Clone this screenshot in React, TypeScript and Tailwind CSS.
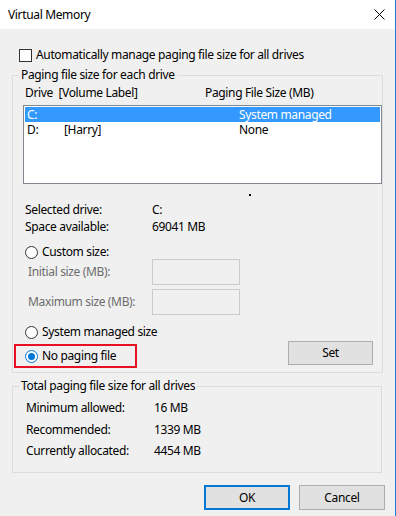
const Radio = ({ checked }: { checked?: boolean }) => (
  <span
    className={
      checked
        ? "flex h-[13px] w-[13px] shrink-0 items-center justify-center rounded-full border border-[#0078d7] bg-white"
        : "flex h-[13px] w-[13px] shrink-0 items-center justify-center rounded-full border border-[#333333] bg-white"
    }
  >
    {checked && <span className="h-[7px] w-[7px] rounded-full bg-[#0078d7]" />}
  </span>
);

const Field = () => (
  <div className="ml-auto h-[26px] w-[88px] border border-[#cccccc] bg-[#f0f0f0]" />
);

const App = () => {
  return (
    <div className="h-[516px] w-[396px] overflow-hidden border-r border-[#1a7fd6] bg-[#f0f0f0] font-['Segoe_UI','Noto_Sans',sans-serif] text-[12px] leading-[14px] tracking-[-0.35px] text-black">
      {/* title bar */}
      <div className="flex h-[29px] items-center bg-white pl-[8px] pr-[10px]">
        <span>Virtual Memory</span>
        <svg className="ml-auto" width="11" height="11" viewBox="0 0 11 11">
          <path d="M0.5 0.5 L10.5 10.5 M10.5 0.5 L0.5 10.5" stroke="#000" strokeWidth="1" />
        </svg>
      </div>

      <div className="flex flex-col">
        <label className="ml-[19px] mt-[19px] flex items-center gap-[4px]">
          <span className="h-[13px] w-[13px] border border-[#333333] bg-white" />
          <span>Automatically manage paging file size for all drives</span>
        </label>

        {/* paging file size for each drive */}
        <fieldset className="ml-[12px] mt-[5px] h-[306px] w-[370px] border border-[#dcdcdc]">
          <legend className="ml-[6px] px-[2px] leading-[16px]">Paging file size for each drive</legend>
          <div className="mt-[3px] flex pl-[12px]">
            <span className="w-[180px]">Drive&nbsp;&nbsp;[Volume Label]</span>
            <span>Paging File Size (MB)</span>
          </div>
          <div className="ml-[10px] mt-[5px] h-[79px] w-[359px] border border-[#828790] bg-white p-[1px] leading-[13px]">
            <div className="flex h-[15px] items-center bg-[#3399ff] pl-[2px] text-white">
              <span className="w-[212px]">C:</span>
              <span>System managed</span>
            </div>
            <div className="flex h-[15px] items-center pl-[2px]">
              <span className="w-[37px]">D:</span>
              <span className="w-[175px]">[Harry]</span>
              <span>None</span>
            </div>
          </div>
          <div className="ml-[236px] mt-[10px] h-[2px] w-[2px] bg-black" />

          <div className="mt-[7px] flex pl-[12px]">
            <span className="w-[127px]">Selected drive:</span>
            <span>C:</span>
          </div>
          <div className="mt-[3px] flex pl-[12px]">
            <span className="w-[127px]">Space available:</span>
            <span>69041 MB</span>
          </div>

          <div className="ml-[12px] mt-[11px] flex items-center gap-[4px]">
            <Radio />
            <span>Custom size:</span>
          </div>
          <div className="flex w-[227px] items-center pl-[15px] text-[#6d6d6d]">
            <span>Initial size (MB):</span>
            <Field />
          </div>
          <div className="mt-[4px] flex w-[227px] items-center pl-[15px] text-[#6d6d6d]">
            <span>Maximum size (MB):</span>
            <Field />
          </div>

          <div className="ml-[12px] mt-[10px] flex items-center gap-[4px]">
            <Radio />
            <span>System managed size</span>
          </div>
          <div className="mt-[2px] flex items-start">
            <div className="ml-[1px] mt-[3px] flex h-[24px] w-[123px] items-center gap-[4px] border-2 border-[#e81123] pl-[9px]">
              <Radio checked />
              <span>No paging file</span>
            </div>
            <button className="ml-auto mr-[9px] h-[24px] w-[85px] border border-[#adadad] bg-[#e1e1e1]">Set</button>
          </div>
        </fieldset>

        {/* totals */}
        <fieldset className="ml-[12px] mt-[5px] h-[95px] w-[370px] border border-[#dcdcdc]">
          <legend className="ml-[6px] px-[2px] leading-[16px]">Total paging file size for all drives</legend>
          <div className="mt-[7px] flex pl-[13px]">
            <span className="w-[128px]">Minimum allowed:</span>
            <span>16 MB</span>
          </div>
          <div className="mt-[8px] flex pl-[13px]">
            <span className="w-[128px]">Recommended:</span>
            <span>1339 MB</span>
          </div>
          <div className="mt-[7px] flex pl-[13px]">
            <span className="w-[128px]">Currently allocated:</span>
            <span>4454 MB</span>
          </div>
        </fieldset>

        <div className="ml-[204px] mt-[12px] flex gap-[9px]">
          <button className="h-[25px] w-[86px] border-2 border-[#0078d7] bg-[#e1e1e1]">OK</button>
          <button className="h-[25px] w-[86px] border border-[#adadad] bg-[#e1e1e1]">Cancel</button>
        </div>
      </div>
    </div>
  );
};

export default App;
